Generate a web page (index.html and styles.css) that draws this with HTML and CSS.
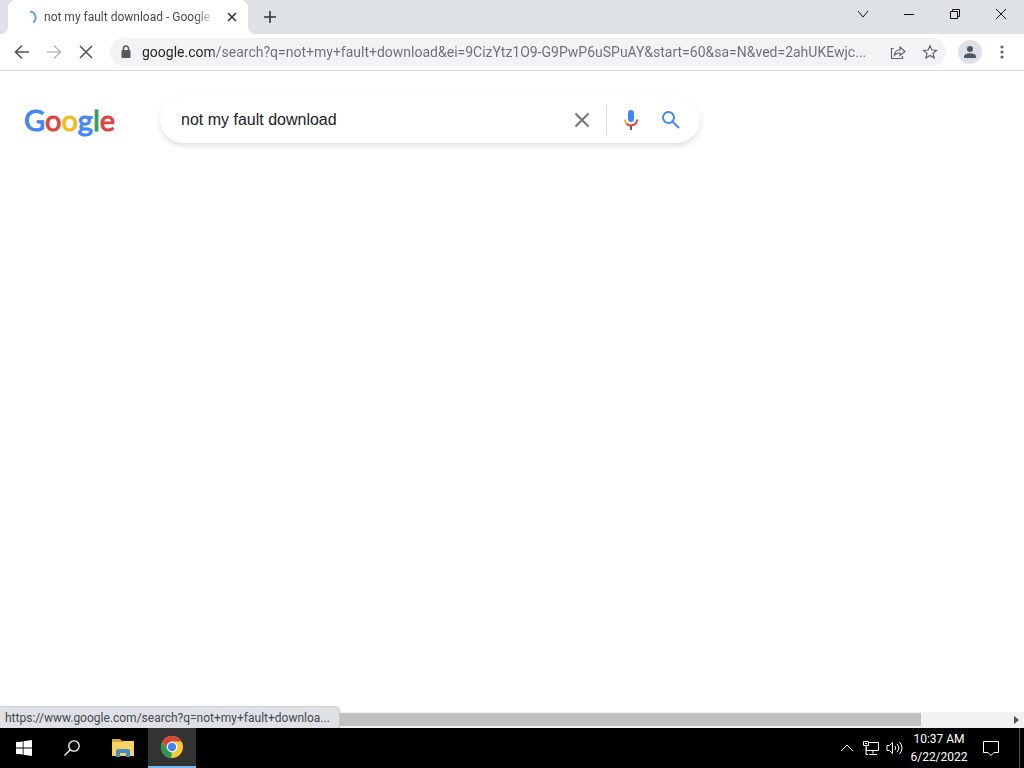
FILE: index.html
```html
<!DOCTYPE html>
<html lang="en">
<head>
    <meta charset="UTF-8">
    <meta name="viewport" content="width=device-width, initial-scale=1.0">
    <title>not my fault download - Google Search</title>
    <link rel="stylesheet" href="styles.css">
</head>
<body>
    <header class="tab-strip">
        <div class="tab">
            <svg class="spinner" width="16" height="16" viewBox="0 0 16 16"><path d="M8 2.500a6 6 0 0 1 3 11"/></svg>
            <span class="tab-title">not my fault download - Google</span>
            <button class="tab-close" aria-label="Close tab">
                <svg width="16" height="16" viewBox="0 0 16 16"><path d="M4 4l8 8M12 4l-8 8"/></svg>
            </button>
        </div>
        <button class="new-tab" aria-label="New tab">
            <svg width="16" height="16" viewBox="0 0 16 16"><path d="M8 2v12M2 8h12"/></svg>
        </button>
        <div class="window-buttons">
            <button aria-label="Search tabs"><svg width="12" height="12" viewBox="0 0 12 12"><path d="M1 3l5 6 5-6"/></svg></button>
            <button aria-label="Minimize"><svg width="12" height="12" viewBox="0 0 12 12"><path d="M1 6.500h10"/></svg></button>
            <button aria-label="Restore"><svg width="12" height="12" viewBox="0 0 12 12"><path d="M1.500 3.500h7v7h-7zM3.500 3.500v-2h7v7h-2"/></svg></button>
            <button aria-label="Close"><svg width="12" height="12" viewBox="0 0 12 12"><path d="M1 1l10 10M11 1L1 11"/></svg></button>
        </div>
    </header>

    <nav class="toolbar">
        <button class="nav-button" aria-label="Back"><svg width="16" height="16" viewBox="0 0 16 16"><path d="M15 8H2M8 1.500L1.500 8 8 14.500"/></svg></button>
        <button class="nav-button" aria-label="Forward" disabled><svg width="16" height="16" viewBox="0 0 16 16"><path d="M1 8h13M8 1.500L14.500 8 8 14.500"/></svg></button>
        <button class="nav-button" aria-label="Stop loading"><svg width="16" height="16" viewBox="0 0 16 16"><path d="M2 2l12 12M14 2L2 14"/></svg></button>

        <div class="address-bar">
            <svg class="lock" width="16" height="16" viewBox="0 0 16 16">
                <rect x="3.500" y="6" width="9" height="8" rx="1"/>
                <path d="M5.500 7V4.500a2.500 2.500 0 0 1 5 0V7"/>
            </svg>
            <input class="url" type="text" aria-label="Address" value="google.com/search?q=not+my+fault+download&amp;ei=9CizYtz1O9-G9PwP6uSPuAY&amp;start=60&amp;sa=N&amp;ved=2ahUKEwjc...">
            <button aria-label="Share">
                <svg width="16" height="16" viewBox="0 0 16 16"><path d="M3.500 4.500h-2v10h11V12M4.500 11c.3-3.500 2.500-5 5.500-5V3l5 4.500-5 4V9C7.500 9 5.800 9.500 4.500 11z"/></svg>
            </button>
            <button aria-label="Bookmark this tab">
                <svg width="16" height="16" viewBox="0 0 16 16"><path d="M8 1.800l1.900 4.200 4.600.4-3.500 3 1.100 4.500L8 11.500l-4.100 2.400L5 9.400l-3.500-3 4.600-.4z"/></svg>
            </button>
        </div>

        <button class="profile" aria-label="Profile">
            <svg width="16" height="16" viewBox="0 0 16 16"><circle cx="8" cy="5" r="3"/><path d="M2 14v-1.500C2 10.200 5 9.300 8 9.300s6 .9 6 3.200V14z"/></svg>
        </button>
        <button class="menu" aria-label="Menu">
            <svg width="16" height="16" viewBox="0 0 16 16"><circle cx="8" cy="3" r="1.600"/><circle cx="8" cy="8" r="1.600"/><circle cx="8" cy="13" r="1.600"/></svg>
        </button>
    </nav>

    <main class="page">
        <a class="logo" href="#" aria-label="Google"><span class="blue">G</span><span class="red">o</span><span class="yellow">o</span><span class="blue">g</span><span class="green">l</span><span class="red">e</span></a>
        <form class="search-box">
            <input type="text" aria-label="Search" value="not my fault download">
            <button type="button" class="clear" aria-label="Clear">
                <svg width="24" height="24" viewBox="0 0 24 24"><path d="M5.500 5.500l13 13M18.500 5.500l-13 13"/></svg>
            </button>
            <button type="button" class="voice" aria-label="Search by voice">
                <svg width="24" height="24" viewBox="0 0 24 24">
                    <rect x="9" y="2" width="6" height="12" rx="3" fill="#4285f4"/>
                    <path d="M5.900 11.500c0 1.700.7 3.200 1.800 4.300" stroke="#fbbc04"/>
                    <path d="M7.600 15.700C8.700 16.900 10.300 17.600 12 17.600c3.400 0 6.100-2.700 6.100-6.100" stroke="#ea4335"/>
                    <path d="M12 18v4" stroke="#5f6368"/>
                </svg>
            </button>
            <button type="submit" class="submit" aria-label="Google Search">
                <svg width="24" height="24" viewBox="0 0 24 24"><circle cx="9.500" cy="9.500" r="5.500"/><path d="M13.700 13.700l6.300 6.300"/></svg>
            </button>
        </form>
        <div class="status-bubble">https://www.google.com/search?q=not+my+fault+downloa...</div>
    </main>

    <div class="scrollbar">
        <div class="track"><div class="thumb"></div></div>
        <button aria-label="Scroll right"></button>
    </div>

    <footer class="taskbar">
        <button class="task" aria-label="Start">
            <svg width="16" height="16" viewBox="0 0 16 16" fill="#fff"><path d="M0 2.300l6.700-.9v6.200H0zM7.500 1.300L16 0v7.600H7.500zM0 8.400h6.700v6.200L0 13.700zM7.500 8.400H16V16l-8.500-1.200z"/></svg>
        </button>
        <button class="task" aria-label="Search">
            <svg width="16" height="16" viewBox="0 0 16 16" fill="none" stroke="#fff" stroke-width="1.300"><circle cx="10" cy="6" r="5.200"/><path d="M6.300 9.700L.5 15.500"/></svg>
        </button>
        <button class="task explorer" aria-label="File Explorer">
            <svg width="22" height="20" viewBox="0 0 22 20">
                <path d="M0 1h8l2 2h10v3H0z" fill="#dba53a"/>
                <path d="M0 4h10l2-1h10v15H0z" fill="#f8d064"/>
                <path d="M4 19v-6q0-2 2-2h10q2 0 2 2v6h-4v-4H8v4z" fill="#3e8fcc"/>
            </svg>
        </button>
        <button class="task active" aria-label="Google Chrome">
            <svg width="24" height="24" viewBox="0 0 24 24">
                <circle cx="12" cy="12" r="11" fill="#fbc934"/>
                <path d="M12 12L7.500 14.800 2.500 6.500A11 11 0 0 1 21.500 6.500H12z" fill="#dc4437"/>
                <path d="M2.500 6.500L7.300 14.700 12 17.500 11 23A11 11 0 0 1 2.500 6.500z" fill="#279b55"/>
                <circle cx="12" cy="12" r="5.400" fill="#fff"/>
                <circle cx="12" cy="12" r="4.200" fill="#4285f4"/>
            </svg>
        </button>
        <div class="tray">
            <button aria-label="Show hidden icons"><svg width="16" height="16" viewBox="0 0 16 16"><path d="M2 11l6-6 6 6"/></svg></button>
            <button aria-label="Network"><svg width="16" height="16" viewBox="0 0 16 16"><path d="M6 2.500h9.500v8H3.500V7M10 10.500v3M6 14.500h8M.5 1.500h5v4h-5zM3 5.500v9h2M2 3.500h2"/></svg></button>
            <button aria-label="Volume"><svg width="18" height="16" viewBox="0 0 18 16"><path d="M1 5.500h2.500l3-3v11l-3-3H1zM9 6q1.500 2 0 4M11 4q3.500 4 0 8M13.500 2q5 6 0 12"/></svg></button>
            <button class="clock"><span>10:37 AM</span><span>6/22/2022</span></button>
            <button class="notifications" aria-label="Notifications"><svg width="18" height="18" viewBox="0 0 18 18"><path d="M1.500 2.500h15v11h-4.500l-3 3-3-3H1.500z"/></svg></button>
        </div>
    </footer>
</body>
</html>
```
FILE: styles.css
```css
* {
    box-sizing: border-box;
}

body {
    margin: 0;
    height: 100vh;
    display: flex;
    flex-direction: column;
    overflow: hidden;
    background: #fff;
    font-family: Roboto, "Open Sans", sans-serif;
    font-size: 12px;
}

button {
    display: flex;
    align-items: center;
    justify-content: center;
    flex: none;
    padding: 0;
    border: none;
    background: none;
    color: inherit;
    font: inherit;
}

input {
    min-width: 0;
    padding: 0;
    border: none;
    outline: none;
    background: none;
    font: inherit;
}

svg {
    display: block;
    flex: none;
}

/* Tab strip */
.tab-strip {
    display: flex;
    height: 34px;
    flex: none;
    padding-left: 8px;
    background: #dee1e6;
}

.tab {
    position: relative;
    display: flex;
    align-items: center;
    width: 240px;
    padding: 0 8px 0 14px;
    border-radius: 8px 8px 0 0;
    background: #fff;
    color: #45494d;
}

/* curved feet of the active tab */
.tab::before,
.tab::after {
    content: "";
    position: absolute;
    bottom: 0;
    width: 8px;
    height: 8px;
}

.tab::before {
    right: 100%;
    background: radial-gradient(circle at top left, transparent 8px, #fff 8px);
}

.tab::after {
    left: 100%;
    background: radial-gradient(circle at top right, transparent 8px, #fff 8px);
}

.spinner {
    fill: none;
    stroke: #6ba0e0;
    stroke-width: 2;
}

.tab-title {
    flex: 1;
    margin: 0 8px 0 6px;
    white-space: nowrap;
    mask-image: linear-gradient(to right, #000 88%, transparent);
}

.tab-close svg,
.new-tab svg {
    fill: none;
    stroke: #333639;
    stroke-width: 1.6;
}

.new-tab {
    width: 28px;
    margin-left: 8px;
}

.window-buttons {
    display: flex;
    height: 28px;
    margin-left: auto;
}

.window-buttons button {
    width: 46px;
}

.window-buttons svg {
    fill: none;
    stroke: #111;
}

/* Toolbar */
.toolbar {
    display: flex;
    align-items: center;
    height: 37px;
    flex: none;
    padding: 0 14px;
    border-bottom: 1px solid #dadce0;
}

.nav-button {
    width: 16px;
    margin-right: 16px;
}

.nav-button svg {
    fill: none;
    stroke: #505458;
    stroke-width: 1.6;
}

.nav-button:disabled svg {
    stroke: #babcbe;
}

.address-bar {
    display: flex;
    align-items: center;
    flex: 1;
    min-width: 0;
    height: 28px;
    padding: 0 8px;
    border-radius: 14px;
    background: #f1f3f4;
}

.lock {
    margin-right: 8px;
    fill: #55595d;
}

.lock path {
    fill: none;
    stroke: #55595d;
    stroke-width: 1.6;
}

/* host name is darker than the rest of the address */
.url {
    flex: 1;
    height: 24px;
    font-size: 14px;
    color: transparent;
    background: linear-gradient(to right, #202124 72px, #6b6f73 72px);
    background-clip: text;
}

.address-bar button {
    width: 16px;
    margin-left: 16px;
}

.address-bar button svg {
    fill: none;
    stroke: #5f6368;
    stroke-width: 1.2;
}

.address-bar button:nth-of-type(1) {
    margin-left: 8px;
}

.profile {
    width: 24px;
    height: 24px;
    margin: 0 12px;
    border-radius: 50%;
    background: #dde1e7;
    fill: #4d5866;
}

.menu {
    width: 16px;
    fill: #5f6368;
}

/* Page content */
.page {
    position: relative;
    display: flex;
    align-items: flex-start;
    flex: 1;
    padding: 25px 24px 0;
}

.logo {
    width: 136px;
    margin-top: 4px;
    font-family: Lato, sans-serif;
    font-size: 29px;
    line-height: 40px;
    text-decoration: none;
    -webkit-text-stroke: 1px currentColor;
}

.blue {
    color: #4285f4;
}

.red {
    color: #dc4440;
}

.yellow {
    color: #f4bb18;
}

.green {
    color: #34a058;
}

.search-box {
    display: flex;
    align-items: center;
    width: 540px;
    height: 47px;
    padding: 0 14px 0 21px;
    border-radius: 24px;
    box-shadow: 0 3px 5px rgba(64, 60, 67, .16);
}

.search-box input {
    flex: 1;
    height: 40px;
    font-family: "Liberation Sans", Arial, sans-serif;
    font-size: 16px;
    color: #202124;
}

.search-box svg {
    fill: none;
    stroke-width: 2;
}

.clear {
    width: 36px;
    padding-right: 12px;
    stroke: #70757a;
}

.voice {
    width: 48px;
    height: 30px;
    border-left: 1px solid #dadce0;
}

.submit {
    width: 32px;
    stroke: #4285f4;
}

.submit svg {
    margin-left: 2px;
}

.status-bubble {
    position: absolute;
    left: 0;
    bottom: -16px;
    z-index: 1;
    min-width: 340px;
    height: 22px;
    padding: 0 8px 0 5px;
    border-top: 1px solid #d0d3d6;
    border-right: 1px solid #c4c7ca;
    border-radius: 0 5px 0 0;
    background: #dee1e6;
    color: #45494d;
    line-height: 22px;
    white-space: nowrap;
}

.scrollbar {
    display: flex;
    height: 16px;
    flex: none;
    background: #f1f1f1;
}

.track {
    flex: 1;
    padding: 1px 0 2px;
}

.thumb {
    width: calc(100% - 87px);
    height: 100%;
    background: #c1c1c1;
}

.scrollbar button {
    width: 16px;
}

.scrollbar button::before {
    content: "";
    border: 4px solid transparent;
    border-left: 5px solid #505050;
    border-right: none;
}

/* Taskbar */
.taskbar {
    display: flex;
    height: 40px;
    flex: none;
    background: #000;
    color: #fff;
}

.task {
    width: 48px;
}

.explorer {
    width: 52px;
    padding-left: 2px;
}

.active {
    border-bottom: 2px solid #76b9ed;
    background: #333;
}

.tray {
    display: flex;
    margin-left: auto;
    padding-right: 4px;
}

.tray button {
    width: 24px;
}

.tray svg {
    fill: none;
    stroke: #fff;
}

.tray .clock {
    flex-direction: column;
    width: 64px;
    line-height: 18px;
}

.tray .notifications {
    width: 49px;
    padding: 0 12px 0 4px;
    border-right: 1px solid #555;
}
```
